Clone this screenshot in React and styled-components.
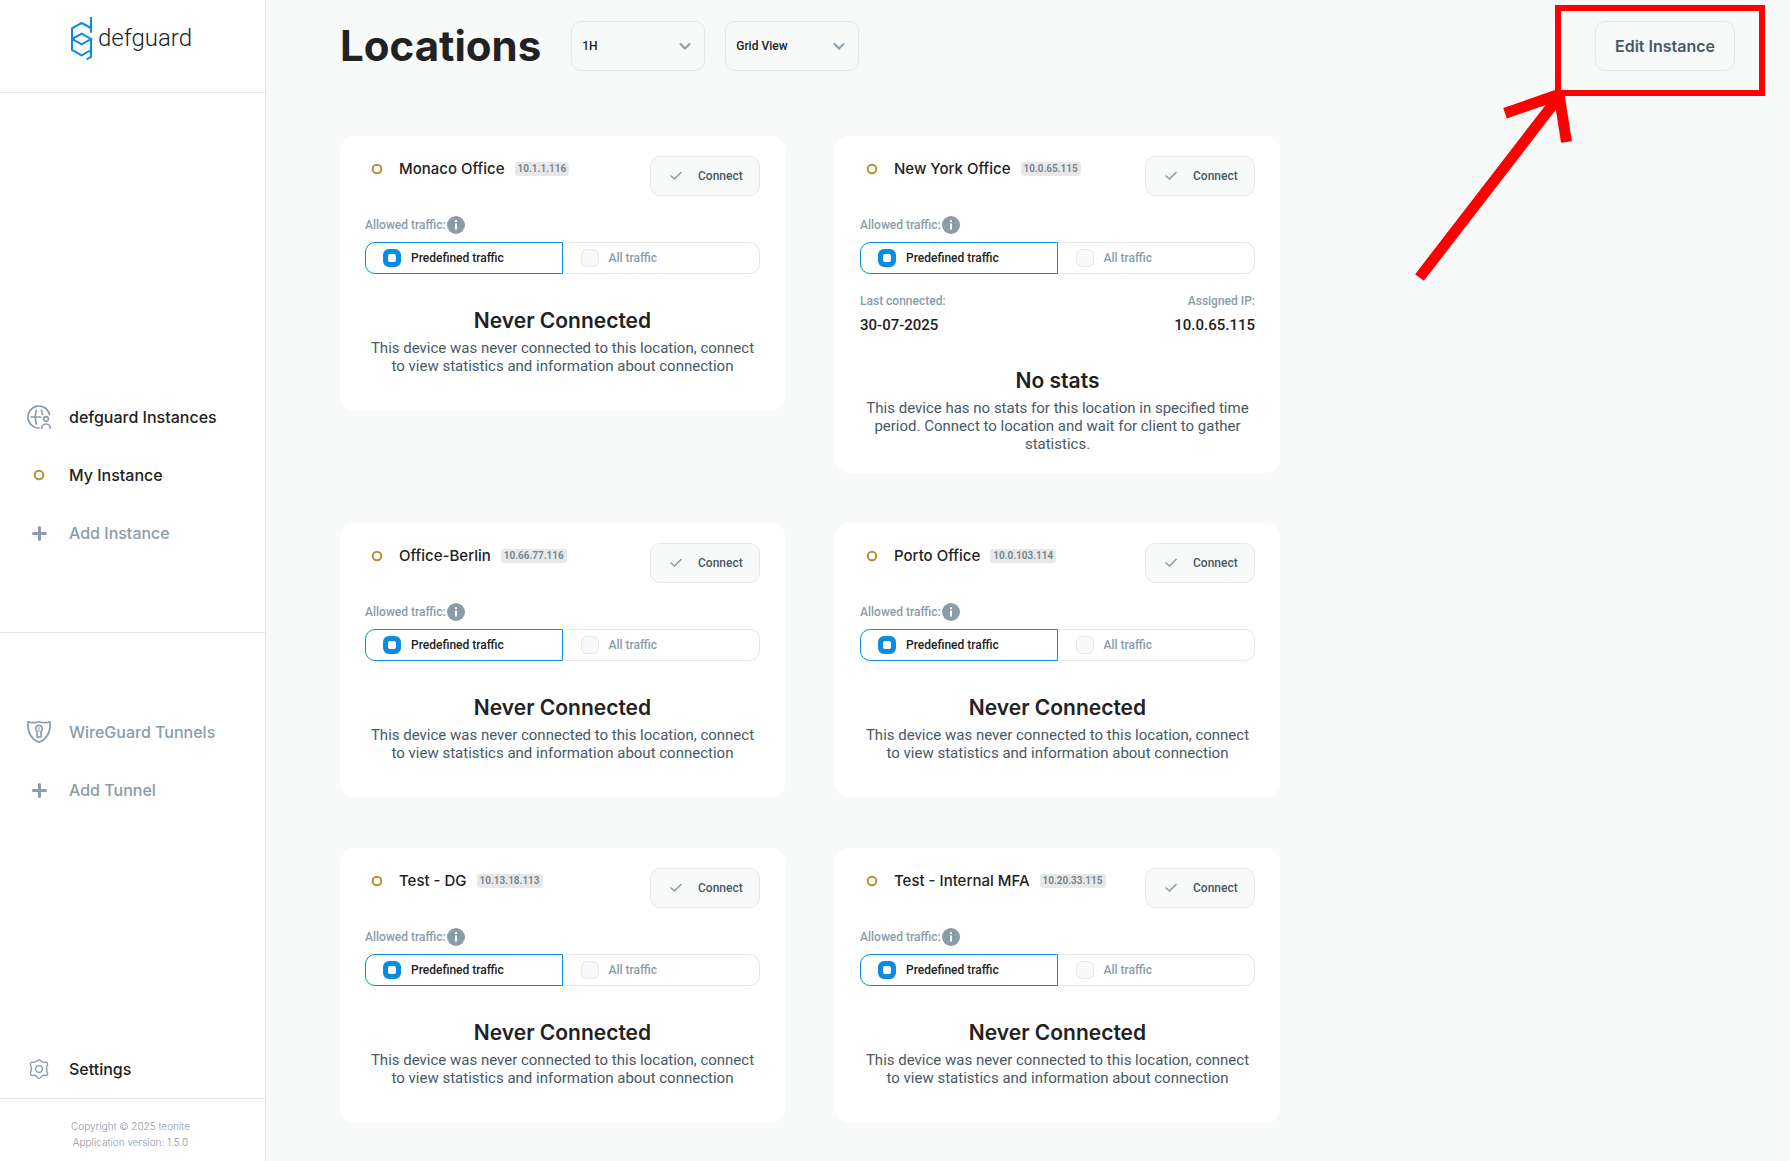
import React, { useState } from 'react'
import styled, { createGlobalStyle } from 'styled-components'

const GlobalStyle = createGlobalStyle`
  *, *::before, *::after {
    box-sizing: border-box;
  }
  body {
    margin: 0;
    background: #f8faf9;
    color: #222222;
    font-family: Roboto, "Liberation Sans", sans-serif;
  }
  h1, h2, h3, p, ul, dl, dd, fieldset {
    margin: 0;
    padding: 0;
  }
  button, select {
    font-family: inherit;
    cursor: pointer;
  }
`;

const Page = styled.div`
  position: relative;
  display: flex;
  min-height: 100vh;
`;
const Sidebar = styled.aside`
  flex: 0 0 266px;
  display: flex;
  flex-direction: column;
  background: #ffffff;
  border-right: 1px solid #e8e8e8;
`;
const LogoLink = styled.a`
  display: flex;
  align-items: flex-start;
  gap: 5px;
  height: 93px;
  padding: 17px 0 0 71px;
  border-bottom: 1px solid #e8e8e8;
  color: #222222;
  text-decoration: none;
`;
const LogoText = styled.span`
  font-size: 24px;
  font-weight: 300;
  line-height: 42px;
`;
const InstancesNav = styled.nav`
  flex: 4 0 auto;
  display: flex;
  flex-direction: column;
  justify-content: flex-end;
  padding-bottom: 70px;
  border-bottom: 1px solid #e8e8e8;
`;
const TunnelsNav = styled.nav`
  flex: 3 0 auto;
  padding-top: 70px;
`;
const NavLink = styled.a`
  display: flex;
  align-items: center;
  gap: 18px;
  height: 58px;
  padding-left: 27px;
  font-family: Inter, sans-serif;
  font-size: 16px;
  font-weight: 500;
  color: ${(props) => (props.$muted ? '#899ca8' : '#222222')};
  text-decoration: none;
`;
const NavIcon = styled.svg`
  flex: none;
  width: 24px;
  height: 24px;
  fill: none;
  stroke: #899ca8;
  stroke-linecap: round;
  stroke-linejoin: round;
`;
const Copyright = styled.footer`
  height: 63px;
  padding: 19px 4px 0 0;
  border-top: 1px solid #e8e8e8;
  font-family: Inter, sans-serif;
  font-size: 10px;
  font-weight: 300;
  line-height: 16px;
  text-align: center;
  color: #899ca8;
`;

const Main = styled.main`
  flex: 1;
  min-width: 0;
  padding: 21px 55px 38px 74px;
`;
const Header = styled.header`
  display: flex;
  align-items: center;
  gap: 20px;
  height: 50px;
  margin-bottom: 65px;
`;
const Title = styled.h1`
  margin-right: 10px;
  font-family: Inter, sans-serif;
  font-size: 42px;
  font-weight: 700;
  line-height: 50px;
`;
const SelectBox = styled.div`
  position: relative;
  width: 134px;
`;
const Select = styled.select`
  appearance: none;
  width: 100%;
  height: 50px;
  padding: 0 30px 0 10px;
  border: 1px solid #e8e8e8;
  border-radius: 10px;
  background: transparent;
  color: #222222;
  font-size: 12px;
  font-weight: 500;
`;
const SelectArrow = styled.svg`
  position: absolute;
  top: 19px;
  right: 14px;
  width: 12px;
  height: 12px;
  pointer-events: none;
`;
const EditButton = styled.button`
  height: 50px;
  margin-left: auto;
  padding: 0 19px;
  border: 1px solid #e8e8e8;
  border-radius: 10px;
  background: transparent;
  color: #485964;
  && {
    font-family: Inter, sans-serif;
  }
  font-size: 16px;
  font-weight: 600;
`;

const Grid = styled.div`
  display: grid;
  grid-template-columns: repeat(auto-fill, 445px);
  align-items: start;
  gap: 50px;
`;
const Card = styled.article`
  min-height: 275px;
  padding: 20px 25px;
  border-radius: 15px;
  background: #ffffff;
`;
const CardTop = styled.div`
  display: flex;
  align-items: flex-start;
  height: 40px;
`;
const CardName = styled.div`
  flex: 1;
  display: flex;
  align-items: center;
  gap: 10px;
`;
const Name = styled.h2`
  font-family: Inter, sans-serif;
  font-size: 15px;
  font-weight: 500;
  line-height: 26px;
`;
const IpBadge = styled.span`
  padding: 0 3px;
  border-radius: 3px;
  background: #e8e8e8;
  color: #71838f;
  font-size: 10px;
  font-weight: 600;
  line-height: 14px;
`;
const ConnectButton = styled.button`
  display: flex;
  align-items: center;
  gap: 16px;
  width: 110px;
  height: 40px;
  padding: 0 0 0 19px;
  border: 1px solid #e8e8e8;
  border-radius: 10px;
  background: #f8faf9;
  color: #485964;
  font-size: 12px;
  font-weight: 500;
`;
const Traffic = styled.fieldset`
  min-width: 0;
  margin-top: 20px;
  border: 0;
`;
const TrafficLabel = styled.legend`
  display: flex;
  align-items: center;
  gap: 1px;
  height: 18px;
  margin-bottom: 8px;
  padding: 0;
  font-size: 12px;
  font-weight: 500;
  color: #899ca8;
`;
const Options = styled.div`
  display: flex;
`;
const Option = styled.label`
  flex: 1;
  display: flex;
  align-items: center;
  gap: 10px;
  height: 32px;
  padding-left: 17px;
  border: 1px solid ${(props) => (props.$active ? '#0c8ce0' : '#e8e8e8')};
  color: ${(props) => (props.$active ? '#222222' : '#899ca8')};
  font-size: 12px;
  font-weight: 500;
  cursor: pointer;
  &:first-child {
    border-radius: 10px 0 0 10px;
    border-right-color: ${(props) => (props.$active ? '#0c8ce0' : 'transparent')};
  }
  &:last-child {
    border-radius: 0 10px 10px 0;
    border-left-color: ${(props) => (props.$active ? '#0c8ce0' : 'transparent')};
  }
`;
const Radio = styled.input`
  appearance: none;
  width: 18px;
  height: 18px;
  margin: 0;
  border: 1px solid #e8e8e8;
  border-radius: 6px;
  background: #f8faf9;
  &:checked {
    border: 5px solid #0c8ce0;
    background: #0c8ce0;
  }
  &:checked::before {
    content: "";
    display: block;
    width: 8px;
    height: 8px;
    border-radius: 2px;
    background: #ffffff;
  }
`;
const Stats = styled.dl`
  display: flex;
  justify-content: space-between;
  margin-top: 20px;
`;
const Stat = styled.div`
  &:last-child {
    text-align: right;
  }
`;
const StatLabel = styled.dt`
  margin-bottom: 8px;
  color: #899ca8;
  font-size: 12px;
  font-weight: 500;
  line-height: 14px;
`;
const StatValue = styled.dd`
  font-size: 15px;
  font-weight: 500;
  line-height: 18px;
`;
const Message = styled.div`
  margin-top: 35px;
  text-align: center;
`;
const MessageTitle = styled.h3`
  margin-bottom: 6px;
  font-family: Inter, sans-serif;
  font-size: 21px;
  font-weight: 600;
  line-height: 24px;
`;
const MessageText = styled.p`
  color: #485964;
  font-size: 15px;
  line-height: 18px;
`;
const Highlight = styled.svg`
  position: absolute;
  top: 0;
  right: 0;
  width: 400px;
  height: 300px;
  pointer-events: none;
`;

const locations = [
  { name: 'Monaco Office', ip: '10.1.1.116' },
  { name: 'New York Office', ip: '10.0.65.115', lastConnected: '30-07-2025' },
  { name: 'Office-Berlin', ip: '10.66.77.116' },
  { name: 'Porto Office', ip: '10.0.103.114' },
  { name: 'Test - DG', ip: '10.13.18.113' },
  { name: 'Test - Internal MFA', ip: '10.20.33.115' },
];

const Logo = () => (
  <svg width="22" height="43" viewBox="213 51 66 129" fill="none" stroke="#0c8ce0" strokeWidth="6" aria-hidden="true">
    <path d="M273 51V98M273 84L245 69L216 85V150L245 166L273 150" />
    <path d="M216 117L245 101L273 117L245 133Z" />
    <path d="M273 117V171L260 178" />
  </svg>
)

const GlobeIcon = () => (
  <NavIcon viewBox="81 73 72 72" strokeWidth="5" aria-hidden="true">
    <path d="M117 142A33 33 0 1 1 149 102" />
    <path d="M109 89Q103 109 109 130M93 109H122M124 89Q127 94 128 101" />
    <circle cx="138" cy="115" r="7" />
    <path d="M125 143A13 13 0 0 1 151 143" />
  </NavIcon>
)

const ShieldIcon = () => (
  <NavIcon viewBox="81 300 72 72" strokeWidth="5" aria-hidden="true">
    <path d="M84 305Q101 311 117 305Q133 311 150 305C152 334 144 356 117 367C90 356 82 334 84 305Z" />
    <path d="M111 334A10 10 0 1 1 123 334V350Q117 353 111 350Z" />
    <path d="M117 323V335" strokeWidth="3" />
  </NavIcon>
)

const GearIcon = () => (
  <NavIcon viewBox="81 81 72 72" strokeWidth="4" aria-hidden="true">
    <path d="M112 92Q117 86 122 92Q127 98 134 97Q143 95 143 103Q137 116 143 130Q143 138 134 136Q127 135 122 142Q117 148 112 142Q107 135 100 136Q91 138 91 130Q97 116 91 103Q91 95 100 97Q107 98 112 92Z" />
    <circle cx="117" cy="117" r="10" />
  </NavIcon>
)

const PlusIcon = () => (
  <NavIcon viewBox="0 0 24 24" strokeWidth="3" aria-hidden="true">
    <path d="M6.5 12.5H18.5M12.5 6.5V18.5" />
  </NavIcon>
)

const Ring = () => (
  <NavIcon viewBox="0 0 24 24" aria-hidden="true">
    <circle cx="12" cy="12" r="4.3" stroke="#b88f30" strokeWidth="2" />
  </NavIcon>
)

const InfoIcon = () => (
  <svg width="18" height="18" viewBox="0 0 18 18" role="img" aria-label="Info">
    <circle cx="9" cy="9" r="9" fill="#899ca8" />
    <path d="M9 7.5V13.5M9 4.3V6" stroke="#ffffff" strokeWidth="2" />
  </svg>
)

const Dropdown = ({ label, options }) => (
  <SelectBox>
    <Select aria-label={label}>
      {options.map((option) => (
        <option key={option}>{option}</option>
      ))}
    </Select>
    <SelectArrow viewBox="0 0 12 12" fill="none" stroke="#899ca8" strokeWidth="2" strokeLinecap="round" aria-hidden="true">
      <path d="M1.5 4L6 8.5L10.5 4" />
    </SelectArrow>
  </SelectBox>
)

const LocationCard = ({ name, ip, lastConnected }) => {
  const [traffic, setTraffic] = useState('Predefined traffic');
  return (
    <Card>
      <CardTop>
        <CardName>
          <Ring />
          <Name>{name}</Name>
          <IpBadge>{ip}</IpBadge>
        </CardName>
        <ConnectButton type="button">
          <svg width="12" height="10" viewBox="0 0 12 10" fill="none" stroke="#899ca8" strokeWidth="1.6" strokeLinecap="round" aria-hidden="true">
            <path d="M1 5L4.5 8L11 1.5" />
          </svg>
          Connect
        </ConnectButton>
      </CardTop>
      <Traffic>
        <TrafficLabel>
          Allowed traffic:
          <InfoIcon />
        </TrafficLabel>
        <Options>
          {['Predefined traffic', 'All traffic'].map((option) => (
            <Option key={option} $active={traffic === option}>
              <Radio
                type="radio"
                name={`traffic-${name}`}
                checked={traffic === option}
                onChange={() => setTraffic(option)}
              />
              {option}
            </Option>
          ))}
        </Options>
      </Traffic>
      {lastConnected && (
        <Stats>
          <Stat>
            <StatLabel>Last connected:</StatLabel>
            <StatValue>{lastConnected}</StatValue>
          </Stat>
          <Stat>
            <StatLabel>Assigned IP:</StatLabel>
            <StatValue>{ip}</StatValue>
          </Stat>
        </Stats>
      )}
      <Message>
        <MessageTitle>{lastConnected ? 'No stats' : 'Never Connected'}</MessageTitle>
        <MessageText>
          {lastConnected
            ? 'This device has no stats for this location in specified time period. Connect to location and wait for client to gather statistics.'
            : 'This device was never connected to this location, connect to view statistics and information about connection'}
        </MessageText>
      </Message>
    </Card>
  )
}

const App = () => {
  return (
    <Page>
      <GlobalStyle />
      <Sidebar>
        <LogoLink href="#">
          <Logo />
          <LogoText>defguard</LogoText>
        </LogoLink>
        <InstancesNav>
          <NavLink href="#instances"><GlobeIcon />defguard Instances</NavLink>
          <NavLink href="#my-instance"><Ring />My Instance</NavLink>
          <NavLink href="#add-instance" $muted><PlusIcon />Add Instance</NavLink>
        </InstancesNav>
        <TunnelsNav>
          <NavLink href="#tunnels" $muted><ShieldIcon />WireGuard Tunnels</NavLink>
          <NavLink href="#add-tunnel" $muted><PlusIcon />Add Tunnel</NavLink>
        </TunnelsNav>
        <NavLink href="#settings"><GearIcon />Settings</NavLink>
        <Copyright>
          <p>Copyright © 2025 teonite</p>
          <p>Application version: 1.5.0</p>
        </Copyright>
      </Sidebar>
      <Main>
        <Header>
          <Title>Locations</Title>
          <Dropdown label="Time range" options={['1H', '2H', '4H', '8H', '24H']} />
          <Dropdown label="View" options={['Grid View', 'Detail View']} />
          <EditButton type="button">Edit Instance</EditButton>
        </Header>
        <Grid>
          {locations.map((location) => (
            <LocationCard key={location.name} {...location} />
          ))}
        </Grid>
      </Main>
      <Highlight viewBox="0 0 400 300" fill="none" stroke="#ff0000" aria-hidden="true">
        <rect x="168" y="8" width="204" height="85" strokeWidth="6" />
        <path d="M29.5 277.5L168 98M115 113.3L169 94.5L176.5 142" strokeWidth="11" strokeLinejoin="bevel" />
      </Highlight>
    </Page>
  )
}

export default App
